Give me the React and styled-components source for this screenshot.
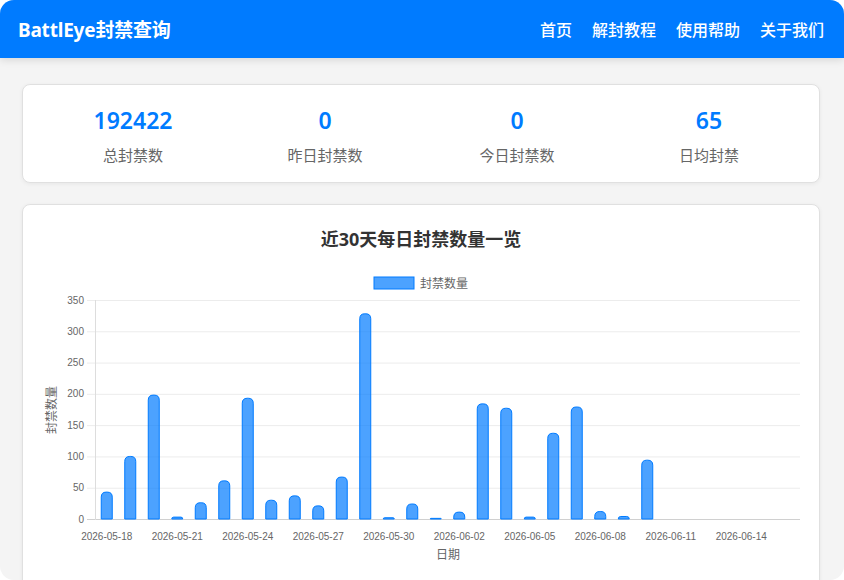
import React from "react";
import styled, {createGlobalStyle} from "styled-components";

const stats = [
    {value: "192422", label: "总封禁数"},
    {value: "0", label: "昨日封禁数"},
    {value: "0", label: "今日封禁数"},
    {value: "65", label: "日均封禁"}
];

const navItems = ["首页", "解封教程", "使用帮助", "关于我们"];

const counts = [43, 100, 198, 3, 26, 61, 193, 30, 37, 21, 67, 328, 2, 24, 1, 11, 184, 177, 3, 137, 179, 12, 4, 94, 0, 0, 0, 0, 0, 0];

// 2026-05-18 .. 2026-06-16
const dates = counts.map((_, i) => {
    const d = new Date(Date.UTC(2026, 4, 18 + i));
    return d.toISOString().slice(0, 10);
});

// chart geometry, in svg units
const W = 796;
const H = 330;
const L = 72;
const R = 777;
const T = 47;
const B = 266;
const MAX = 350;
const step = (R - L) / counts.length;
const yOf = v => B - (v / MAX) * (B - T);

function barPath(cx, v){
    const w = 11;
    const x0 = cx - w / 2;
    const x1 = cx + w / 2;
    const top = yOf(v);
    const h = B - top;
    const r = Math.min(5, h, w / 2);
    return `M${x0},${B} L${x0},${top + r} Q${x0},${top} ${x0 + r},${top} L${x1 - r},${top} Q${x1},${top} ${x1},${top + r} L${x1},${B} Z`;
}

const BanChart = () => (
    <ChartSvg viewBox={`0 0 ${W} ${H}`} width={W} height={H}>
        <rect x="351" y="24" width="40" height="12" fill="rgba(0,123,255,0.7)" stroke="#007bff" strokeWidth="1"/>
        <text x="397" y="34.5" fontSize="12" fill="#666">封禁数量</text>

        {[0, 50, 100, 150, 200, 250, 300, 350].map(v => (
            <g key={v}>
                <line x1="64" x2={R} y1={yOf(v) + 0.5} y2={yOf(v) + 0.5} stroke={v === 0 ? "#d0d0d0" : "#ececec"} strokeWidth="1"/>
                <text x="61" y={yOf(v) + 3.5} fontSize="10" fill="#666" textAnchor="end">{v}</text>
            </g>
        ))}
        <line x1={L + 0.5} x2={L + 0.5} y1={T} y2={B + 1} stroke="#ddd" strokeWidth="1"/>

        {counts.map((v, i) => v > 0 && (
            <path key={i} d={barPath(L + (i + 0.5) * step, v)} fill="rgba(0,123,255,0.7)" stroke="#007bff" strokeWidth="1"/>
        ))}

        {dates.map((d, i) => i % 3 === 0 && (
            <text key={d} x={L + (i + 0.5) * step} y="286.5" fontSize="10" fill="#666" textAnchor="middle">{d}</text>
        ))}

        <text x="425" y="306" fontSize="12" fill="#666" textAnchor="middle">日期</text>
        <text x="0" y="0" fontSize="12" fill="#666" textAnchor="middle" transform="translate(33 157) rotate(-90)">封禁数量</text>
    </ChartSvg>
);

const App = () => (
    <>
        <GlobalStyle/>
        <Page>
            <Header>
                <Brand>BattlEye封禁查询</Brand>
                <Nav>
                    {navItems.map(item => <NavLink key={item} href="#">{item}</NavLink>)}
                </Nav>
            </Header>
            <Main>
                <StatsCard>
                    {stats.map(s => (
                        <Stat key={s.label}>
                            <StatValue>{s.value}</StatValue>
                            <StatLabel>{s.label}</StatLabel>
                        </Stat>
                    ))}
                </StatsCard>
                <ChartCard>
                    <ChartTitle>近30天每日封禁数量一览</ChartTitle>
                    <BanChart/>
                </ChartCard>
            </Main>
        </Page>
    </>
);

const GlobalStyle = createGlobalStyle`
    body{
        margin: 0;
        background: #fff;
        font-family: "Noto Sans", "Noto Sans CJK SC", sans-serif;
    }
`
const Page = styled.div`
    height: 580px;
    overflow: hidden;
    border-radius: 14px;
    background: #f4f4f4;
`
const Header = styled.header`
    height: 58px;
    background: #007bff;
    color: #fff;
    display: flex;
    align-items: center;
    justify-content: space-between;
    padding: 0 20px 0 18px;
    box-shadow: 0 2px 8px rgba(0, 0, 0, 0.12);
    position: relative;
`
const Brand = styled.h1`
    margin: 0;
    font-size: 19px;
    font-weight: 700;
    letter-spacing: -0.2px;
`
const Nav = styled.nav`
    display: flex;
    gap: 20px;
`
const NavLink = styled.a`
    color: #fff;
    text-decoration: none;
    font-size: 16px;
    font-weight: 500;
`
const Main = styled.main`
    padding: 26px 24px 0 22px;
    display: flex;
    flex-direction: column;
    gap: 21px;
`
const Card = styled.section`
    background: #fff;
    border: 1px solid #e0e0e0;
    border-radius: 8px;
    box-shadow: 0 1px 4px rgba(0, 0, 0, 0.06);
`
const StatsCard = styled(Card)`
    display: grid;
    grid-template-columns: repeat(4, 1fr);
    padding: 20px 14px 16px;
`
const Stat = styled.div`
    text-align: center;
`
const StatValue = styled.div`
    color: #007bff;
    font-size: 23px;
    font-weight: 600;
    line-height: 30px;
`
const StatLabel = styled.div`
    color: #666;
    font-size: 15px;
    line-height: 22px;
    margin-top: 9px;
`
const ChartCard = styled(Card)`
    padding: 20px 0 0;
    height: 400px;
`
const ChartTitle = styled.h2`
    margin: 0;
    text-align: center;
    font-size: 18px;
    font-weight: 700;
    line-height: 28px;
    color: #333;
`
const ChartSvg = styled.svg`
    display: block;
    font-family: "Liberation Sans", "Noto Sans CJK SC", sans-serif;
`

export default App;
